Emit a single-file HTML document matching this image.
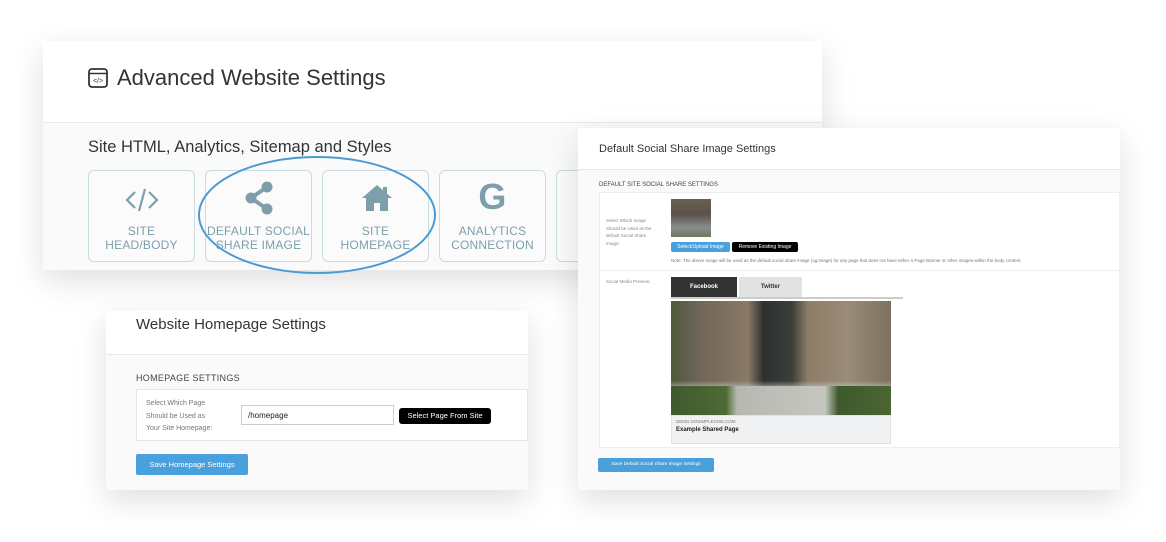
<!DOCTYPE html>
<html><head><style>
*{margin:0;padding:0;box-sizing:border-box}
body{width:1166px;height:542px;background:#fff;position:relative;overflow:hidden;font-family:"Liberation Sans",sans-serif;color:#333}
.p{position:absolute;background:#fafafa;box-shadow:0 10px 30px rgba(0,0,0,.13)}
.hd{position:absolute;left:0;right:0;top:0;background:#fff;border-bottom:1px solid #e8e8e8}
.t{position:absolute;white-space:nowrap}
.tile{position:absolute;top:129px;width:107px;height:92px;border:1.5px solid #c9dbe3;border-radius:6px;background:#fbfbfb;color:#7d9fac;font-size:12px;text-align:center;line-height:14px;letter-spacing:.2px}
.tile .lb{position:absolute;top:53px;left:0;right:0}
.btn{position:absolute;color:#fff;font-size:7px;text-align:center;border-radius:2px}
</style></head><body>

<!-- Panel 1 -->
<div class="p" style="left:43px;top:41px;width:779px;height:229px">
  <div class="hd" style="height:82px"></div>
  <svg class="t" style="left:45px;top:27px" width="20" height="20" viewBox="0 0 20 20"><rect x="1" y="1" width="18" height="18" rx="3" fill="none" stroke="#333" stroke-width="1.8"/><line x1="1" y1="5.5" x2="19" y2="5.5" stroke="#333" stroke-width="1.6"/><text x="10" y="15" font-size="7" text-anchor="middle" fill="#333" font-family="Liberation Sans">&lt;/&gt;</text></svg>
  <div class="t" style="left:74px;top:24px;font-size:22px;color:#333">Advanced Website Settings</div>
  <div class="t" style="left:45px;top:97px;font-size:16.5px;color:#333">Site HTML, Analytics, Sitemap and Styles</div>
  <div class="tile" style="left:45px"><svg style="position:absolute;left:35px;top:14px" width="36" height="30" viewBox="0 0 36 30"><path d="M11 7 L3 15 L11 23 M25 7 L33 15 L25 23 M21 4 L15 26" fill="none" stroke="#7d9fac" stroke-width="2.2"/></svg><div class="lb">SITE<br>HEAD/BODY</div></div>
  <div class="tile" style="left:162px"><svg style="position:absolute;left:36px;top:10px" width="36" height="34" viewBox="0 0 36 34"><line x1="25" y1="6" x2="9" y2="17" stroke="#7d9fac" stroke-width="4"/><line x1="25" y1="28" x2="9" y2="17" stroke="#7d9fac" stroke-width="4"/><circle cx="25" cy="6" r="5.5" fill="#7d9fac"/><circle cx="9" cy="17" r="5.5" fill="#7d9fac"/><circle cx="25" cy="28" r="5.5" fill="#7d9fac"/></svg><div class="lb">DEFAULT SOCIAL<br>SHARE IMAGE</div></div>
  <div class="tile" style="left:279px"><svg style="position:absolute;left:37px;top:12px" width="34" height="30" viewBox="0 0 34 30"><path d="M17 2 L2 15 L6 15 L6 28 L14 28 L14 20 L20 20 L20 28 L28 28 L28 15 L32 15 Z" fill="#7d9fac"/><rect x="23" y="4" width="4" height="7" fill="#7d9fac"/></svg><div class="lb">SITE<br>HOMEPAGE</div></div>
  <div class="tile" style="left:396px"><div style="position:absolute;left:0;right:0;top:8px;font-size:36px;font-weight:bold;line-height:36px">G</div><div class="lb">ANALYTICS<br>CONNECTION</div></div>
  <div class="tile" style="left:513px"></div>
</div>
<svg class="t" style="left:0;top:0" width="1166" height="542"><ellipse cx="317" cy="215" rx="118" ry="58" fill="none" stroke="#4a9ad4" stroke-width="2"/></svg>

<!-- Panel 3 -->
<div class="p" style="left:106px;top:311px;width:422px;height:179px">
  <div class="hd" style="height:44px"></div>
  <div class="t" style="left:30px;top:5px;font-size:15px;color:#333">Website Homepage Settings</div>
  <div class="t" style="left:30px;top:62px;font-size:9px;color:#444;letter-spacing:.3px">HOMEPAGE SETTINGS</div>
  <div style="position:absolute;left:30px;top:78px;width:392px;height:52px;background:#fff;border:1px solid #e6e6e6"></div>
  <div class="t" style="left:40px;top:87px;font-size:7px;line-height:12.5px;color:#777">Select Which Page<br>Should be Used as<br>Your Site Homepage:</div>
  <div style="position:absolute;left:135px;top:94px;width:153px;height:20px;border:1px solid #ccc;background:#fff;font-size:8px;padding:5px 6px;color:#222">/homepage</div>
  <div class="btn" style="left:293px;top:97px;width:92px;height:16px;background:#000;font-size:7.5px;line-height:16px;border-radius:3px">Select Page From Site</div>
  <div class="btn" style="left:30px;top:143px;width:112px;height:21px;background:#4aa0dc;font-size:7.5px;line-height:21px">Save Homepage Settings</div>
</div>

<!-- Panel 2 -->
<div class="p" style="left:578px;top:128px;width:542px;height:362px">
  <div class="hd" style="height:42px"></div>
  <div class="t" style="left:21px;top:15px;font-size:11px;color:#333">Default Social Share Image Settings</div>
  <div class="t" style="left:21px;top:54px;font-size:6px;color:#444">DEFAULT SITE SOCIAL SHARE SETTINGS</div>
  <div style="position:absolute;left:21px;top:64px;width:521px;height:256px;background:#fff;border:1px solid #eee"></div>
  <div style="position:absolute;left:21px;top:142px;width:521px;height:1px;background:#eee"></div>
  <div class="t" style="left:28px;top:89px;font-size:4.5px;line-height:7.5px;color:#888">Select Which Image<br>Should be Used as the<br>default Social Share<br>Image:</div>
  <div style="position:absolute;left:93px;top:71px;width:40px;height:38px;background:linear-gradient(180deg,#6a6155 0,#5b5147 40%,#8a8c90 75%,#6b7a5c 100%)"></div>
  <div class="btn" style="left:93px;top:114px;width:59px;height:10px;background:#4aa0dc;font-size:5px;line-height:10px">Select/Upload Image</div>
  <div class="btn" style="left:154px;top:114px;width:66px;height:10px;background:#000;font-size:5px;line-height:10px">Remove Existing Image</div>
  <div class="t" style="left:93px;top:130px;font-size:4.5px;color:#777">Note: The above image will be used as the default social share image (og:image) for any page that does not have either a Page Banner or other images within the body content.</div>
  <div class="t" style="left:28px;top:151px;font-size:4.5px;color:#888">Social Media Preview:</div>
  <div class="btn" style="left:93px;top:149px;width:66px;height:20px;background:#333;font-size:6px;line-height:20px;border-radius:0;font-weight:bold">Facebook</div>
  <div class="btn" style="left:161px;top:149px;width:63px;height:20px;background:#e0e2e3;color:#333;font-size:6px;line-height:20px;border-radius:0;font-weight:bold">Twitter</div>
  <div style="position:absolute;left:93px;top:169px;width:232px;height:1.5px;background:#ccc"></div>
  <div style="position:absolute;left:93px;top:173px;width:220px;height:114px;background:linear-gradient(180deg,rgba(0,0,0,0) 70%,#cfd0cc 80%,#b5b6b2 88%),linear-gradient(90deg,#4d5a38 0,#6e6458 12%,#8a7a66 35%,#2e3030 42%,#3a4038 55%,#8c7c68 62%,#9a8c78 80%,#7d705e 100%)"></div>
  <div style="position:absolute;left:93px;top:258px;width:220px;height:29px;background:linear-gradient(90deg,#3f5a2e 0,#4e6a34 25%,#b8b8b2 30%,#c6c6c0 70%,#3e5a2c 76%,#4b6533 100%)"></div>
  <div style="position:absolute;left:93px;top:287px;width:220px;height:29px;background:#f0f1f3;border:1px solid #e2e2e2"></div>
  <div class="t" style="left:98px;top:291px;font-size:4.5px;color:#777">DEMO.SOSIMPLECMS.COM</div>
  <div class="t" style="left:98px;top:299px;font-size:6px;color:#222;font-weight:bold">Example Shared Page</div>
  <div class="btn" style="left:20px;top:330px;width:116px;height:14px;background:#4aa0dc;font-size:4.8px;line-height:14px">Save Default Social Share Image Settings</div>
</div>
</body></html>
